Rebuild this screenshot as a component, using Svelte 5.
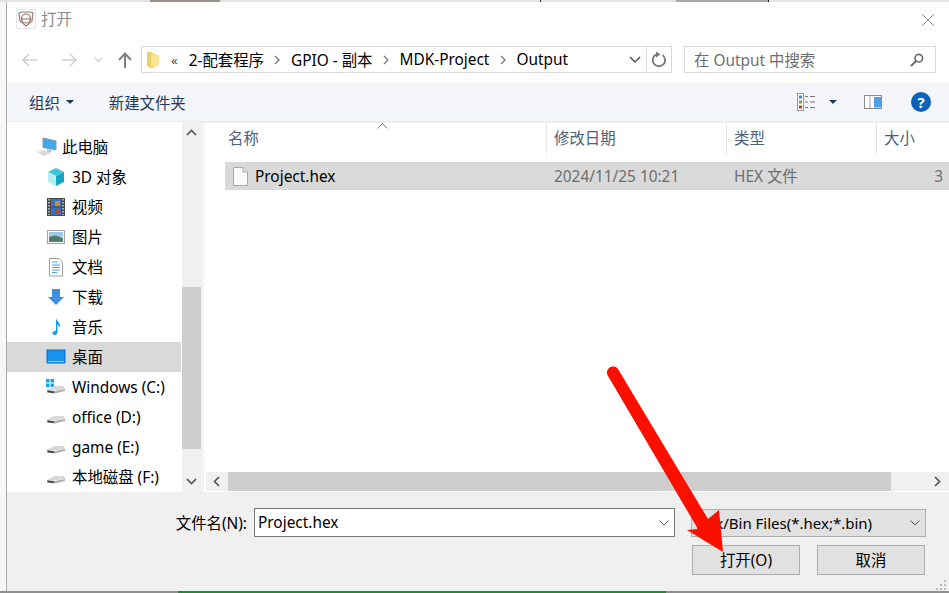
<script>
	const places = [
		{ icon: 'pc', label: '此电脑', top: true },
		{ icon: 'cube', label: '3D 对象' },
		{ icon: 'film', label: '视频' },
		{ icon: 'pic', label: '图片' },
		{ icon: 'doc', label: '文档' },
		{ icon: 'down', label: '下载' },
		{ icon: 'music', label: '音乐' },
		{ icon: 'desk', label: '桌面', selected: true },
		{ icon: 'win', label: 'Windows (C:)', latin: true },
		{ icon: 'disk', label: 'office (D:)', latin: true },
		{ icon: 'disk', label: 'game (E:)', latin: true },
		{ icon: 'disk', label: '本地磁盘 (F:)' }
	];
	const crumbs = ['2-配套程序', 'GPIO - 副本', 'MDK-Project', 'Output'];
</script>

{#snippet drive()}
	<path d="M1 13 L8 9 L18 9 L19 12 L8 13.5 Z" fill="#d8d8d8" />
	<path d="M1 13 L9 14 L19 12 V14 L9 16.5 L1 15.5 Z" fill="#b0b0b0" />
	<path d="M1.5 13.5 L8 14.4 V16 L1.5 15.2 Z" fill="#3a3a3a" />
{/snippet}

<div class="screen">
	<div class="topstrip">
		<span class="frag a"></span><span class="frag b"></span><span class="frag c"></span><span class="frag d"></span>
	</div>
	<div class="window">
		<div class="title">
			<svg width="20" height="20" viewBox="0 0 20 20">
				<rect x="0.5" y="0.5" width="19" height="19" fill="#fff" stroke="#e6e6e6" />
				<path d="M3 4 L6 3 L14 3 L17 4 L16 12 L10 17 L4 12 Z" fill="none" stroke="#8d7a70" stroke-width="1.2" />
				<circle cx="10" cy="9.5" r="4.5" fill="none" stroke="#a06a5c" stroke-width="1.2" />
				<path d="M5 10 H15" stroke="#a06a5c" />
			</svg>
			<span class="title-text">打开</span>
			<svg class="close" width="14" height="14" viewBox="0 0 14 14">
				<path d="M1 1 L13 13 M13 1 L1 13" stroke="#8a8a8a" stroke-width="1" fill="none" />
			</svg>
		</div>

		<div class="nav">
			<svg class="nav-ic" style="width:16px" viewBox="0 0 16 14"><path d="M1 7 H15 M7 1 L1 7 L7 13" fill="none" stroke="#d0d0d0" stroke-width="1.6" /></svg>
			<svg class="nav-ic fwd" style="width:16px" viewBox="0 0 16 14"><path d="M0 7 H14 M8 1 L14 7 L8 13" fill="none" stroke="#d0d0d0" stroke-width="1.6" /></svg>
			<svg class="nav-ic chev" style="width:9px" viewBox="0 0 9 6"><path d="M0.5 0.5 L4.5 4.5 L8.5 0.5" fill="none" stroke="#d0d0d0" stroke-width="1.3" /></svg>
			<svg class="nav-ic up" style="width:14px;height:16px" viewBox="0 0 14 16"><path d="M7 16 V2 M1 8 L7 1.5 L13 8" fill="none" stroke="#7f7f7f" stroke-width="2" /></svg>
			<div class="address">
				<svg class="folder" width="13" height="18" viewBox="0 0 13 18">
					<path d="M0 1 H5 L6 3 H9 V15 L4 17.5 L0 15 Z" fill="#f0cf63" />
					<path d="M4 4 H12 V15 H4 Z" fill="#fbe595" />
				</svg>
				<span class="dbl">«</span>
				{#each crumbs as crumb, i}
					{#if i > 0}
						<svg class="sep" width="6" height="10" viewBox="0 0 6 10"><path d="M1 1 L5 5 L1 9" fill="none" stroke="#777" stroke-width="1.3" /></svg>
					{/if}
					<span class="crumb">{crumb}</span>
				{/each}
				<span class="grow"></span>
				<svg class="addr-chev" width="12" height="7" viewBox="0 0 12 7"><path d="M1 1 L6 6 L11 1" fill="none" stroke="#555" stroke-width="1.5" /></svg>
				<div class="refresh">
					<svg width="16" height="17" viewBox="0 0 16 17">
						<path d="M5 3.6 A6.2 6.2 0 1 0 11.5 4" fill="none" stroke="#777" stroke-width="1.8" />
						<path d="M9 0.5 V6.5 L4.5 3.5 Z" fill="#777" transform="rotate(180 7 3.5)" />
					</svg>
				</div>
			</div>
			<div class="search">
				<span>在 Output 中搜索</span>
				<svg width="14" height="14" viewBox="0 0 14 14">
					<circle cx="8.8" cy="5.2" r="3.8" fill="none" stroke="#6e6e6e" stroke-width="1.7" />
					<path d="M6 8 L1 13" stroke="#6e6e6e" stroke-width="2.2" />
				</svg>
			</div>
		</div>

		<div class="toolbar">
			<span class="tool">组织</span>
			<span class="caret"></span>
			<span class="tool newdir">新建文件夹</span>
			<span class="grow"></span>
			<svg class="views" width="18" height="18" viewBox="0 0 18 18">
				<rect x="0.5" y="0.5" width="6" height="17" fill="#fff" stroke="#999" />
				<rect x="2" y="2.5" width="3" height="3" fill="#3f83c5" />
				<rect x="2" y="7.5" width="3" height="3" fill="#a39235" />
				<rect x="2" y="12.5" width="3" height="3" fill="#b5482f" />
				<path d="M8 3.5 H11 M13 3.5 H18 M8 9 H11 M13 9 H18 M8 14.5 H11 M13 14.5 H18" stroke="#777" />
			</svg>
			<span class="caret dark"></span>
			<svg class="pane" width="18" height="14" viewBox="0 0 18 14">
				<rect x="0.5" y="0.5" width="17" height="13" fill="#fff" stroke="#8c8c8c" />
				<rect x="5" y="1" width="2" height="12" fill="#cfcfcf" />
				<rect x="10" y="2" width="7" height="10.5" fill="#4f9ee6" />
			</svg>
			<span class="help">?</span>
		</div>

		<div class="body">
			<div class="side">
				<div class="tree">
					{#each places as place}
						<div class="place" class:selected={place.selected} class:top={place.top} class:latin={place.latin}>
							<svg class="place-ic" width="20" height="20" viewBox="0 0 20 20">
								{#if place.icon === 'pc'}
									<path d="M6 1 L19 4 V13 L6 10.5 Z" fill="#3fa9ee" stroke="#8a9aa8" />
									<path d="M10 12 L14 13 V15.5 L10 14.5 Z" fill="#b9c3cc" />
									<path d="M0 15 L6 13 L14 16 L7 19 Z" fill="#d5d8dc" />
								{:else if place.icon === 'cube'}
									<path d="M10 1 L18 5 L10 9 L2 5 Z" fill="#3cc6d8" />
									<path d="M2 5 L10 9 V19 L2 15 Z" fill="#b5ecf0" />
									<path d="M18 5 L10 9 V19 L18 15 Z" fill="#12a5bd" />
								{:else if place.icon === 'film'}
									<rect x="1" y="1" width="18" height="18" fill="#4a4a4a" />
									<rect x="5" y="2" width="10" height="7.5" fill="#3c6fc0" />
									<rect x="5" y="10.5" width="10" height="7.5" fill="#3c6fc0" />
									<rect x="9" y="4" width="5" height="5" fill="#c6922f" />
									<rect x="9" y="12" width="5" height="5" fill="#b0482c" />
									<path d="M3 2 V18" stroke="#cfcfcf" stroke-width="1.5" stroke-dasharray="1.5 1.5" />
									<path d="M17 2 V18" stroke="#cfcfcf" stroke-width="1.5" stroke-dasharray="1.5 1.5" />
								{:else if place.icon === 'pic'}
									<rect x="1.5" y="3.5" width="17" height="13" fill="#fff" stroke="#a5a5a5" />
									<rect x="3" y="5" width="14" height="5" fill="#9cc7e8" />
									<path d="M3 10 L9 8.5 L17 11 V15 H3 Z" fill="#4f7d6a" />
								{:else if place.icon === 'doc'}
									<path d="M3.5 1.5 H13 L16.5 5 V19 H3.5 Z" fill="#fff" stroke="#a0a0a0" />
									<path d="M6 5 H11 M6 8 H14 M6 10.5 H14 M6 13 H14 M6 15.5 H11" stroke="#4f9fd8" />
								{:else if place.icon === 'down'}
									<path d="M6 2 H14 V10 H18 L10 18 L2 10 H6 Z" fill="#3d8fe0" />
								{:else if place.icon === 'music'}
									<path d="M10 1 C10.5 5 15.5 6 14 11 C13.5 8.5 12 8 11.5 7.5 V15 C11.5 17.5 8.5 18.5 7 17.5 C5.5 16 7.5 13.5 10 14 Z" fill="#0f9bf0" />
								{:else if place.icon === 'desk'}
									<rect x="1" y="3" width="18" height="13" fill="#1793ee" stroke="#0b6fc0" />
									<path d="M2 14.5 H18" stroke="#9fd4f8" />
								{:else}
									{#if place.icon === 'win'}
										<path d="M0 2 H3.5 V5.5 H0 Z M4.5 2 H8 V5.5 H4.5 Z M0 6.5 H3.5 V10 H0 Z M4.5 6.5 H8 V10 H4.5 Z" fill="#17a5ea" />
									{/if}
									{@render drive()}
								{/if}
							</svg>
							<span class="place-text">{place.label}</span>
						</div>
					{/each}
				</div>
				<div class="vbar">
					<svg width="11" height="7" viewBox="0 0 11 7"><path d="M1 6 L5.5 1.5 L10 6" fill="none" stroke="#555" stroke-width="1.7" /></svg>
					<div class="vspace"></div>
					<div class="vthumb"></div>
					<div class="vspace small"></div>
					<svg width="11" height="7" viewBox="0 0 11 7"><path d="M1 1 L5.5 5.5 L10 1" fill="none" stroke="#555" stroke-width="1.7" /></svg>
				</div>
			</div>

			<div class="list">
				<div class="head">
					<div class="col name">名称
						<svg class="sort" width="11" height="6" viewBox="0 0 11 6"><path d="M0.5 5.5 L5.5 0.5 L10.5 5.5" fill="none" stroke="#8a8a8a" /></svg>
					</div>
					<div class="col date">修改日期</div>
					<div class="col type">类型</div>
					<div class="col size">大小</div>
				</div>
				<div class="row">
					<div class="cell name">
						<svg width="15" height="19" viewBox="0 0 15 19">
							<path d="M0.5 0.5 H10 L14.5 5 V18.5 H0.5 Z" fill="#fbfbfb" stroke="#a8a8a8" />
							<path d="M10 0.5 V5 H14.5" fill="#e6e6e6" stroke="#a8a8a8" />
						</svg>
						<span>Project.hex</span>
					</div>
					<div class="cell date">2024/11/25 10:21</div>
					<div class="cell type">HEX 文件</div>
					<div class="cell size">3</div>
				</div>
				<div class="grow"></div>
				<div class="hbar">
					<svg width="7" height="11" viewBox="0 0 7 11"><path d="M6 1 L1.5 5.5 L6 10" fill="none" stroke="#555" stroke-width="1.7" /></svg>
					<div class="hthumb"></div>
					<svg class="hright" width="7" height="11" viewBox="0 0 7 11"><path d="M1 1 L5.5 5.5 L1 10" fill="none" stroke="#555" stroke-width="1.7" /></svg>
				</div>
			</div>
		</div>

		<div class="footer">
			<div class="fields">
				<span class="label">文件名(N):</span>
				<div class="input">
					<span>Project.hex</span>
					<svg width="10" height="6" viewBox="0 0 10 6"><path d="M0.5 0.5 L5 5 L9.5 0.5" fill="none" stroke="#555" /></svg>
				</div>
				<div class="filter">
					<span>Hex/Bin Files(*.hex;*.bin)</span>
					<svg width="10" height="6" viewBox="0 0 10 6"><path d="M0.5 0.5 L5 5 L9.5 0.5" fill="none" stroke="#555" /></svg>
				</div>
			</div>
			<div class="buttons">
				<button>打开(O)</button>
				<button>取消</button>
			</div>
			<svg class="grip" width="12" height="12" viewBox="0 0 12 12">
				<path d="M9 1 h2 v2 h-2 Z M5 5 h2 v2 h-2 Z M9 5 h2 v2 h-2 Z M1 9 h2 v2 h-2 Z M5 9 h2 v2 h-2 Z M9 9 h2 v2 h-2 Z" fill="#bcbcbc" />
			</svg>
		</div>
	</div>
	<div class="bottomstrip"><span class="green"></span></div>

	<svg class="arrow" width="949" height="593" viewBox="0 0 949 593">
		<path d="M608 376 A5.6 5.6 0 0 1 618 369 L708 519 L719 510 L723 552 L687 530 L698 529 Z" fill="#fb1000" />
	</svg>
</div>

<style>
	:global(body) {
		margin: 0;
		overflow: hidden;
	}

	.screen {
		position: relative;
		width: 949px;
		height: 593px;
		overflow: hidden;
		background: #f7f7f7;
		display: flex;
		flex-direction: column;
		font-family: 'Noto Sans', 'Noto Sans CJK SC', sans-serif;
		font-size: 15.4px;
		color: #000;
	}

	.topstrip {
		height: 2px;
		display: flex;
		background: #e4e4e4;
	}

	.frag {
		display: block;
		height: 2px;
	}

	.frag.a {
		width: 70px;
		margin-left: 150px;
		background: #9c8f88;
	}

	.frag.b {
		width: 1px;
		margin-left: 320px;
		background: #333;
	}

	.frag.c {
		width: 92px;
		margin-left: 135px;
		background: #a8a8a8;
	}

	.frag.d {
		width: 1px;
		background: #222;
	}

	.window {
		flex: 1;
		margin-left: 6px;
		border-left: 1px solid #a9a9a9;
		background: #fff;
		display: flex;
		flex-direction: column;
		min-height: 0;
	}

	.bottomstrip {
		height: 2px;
		background: #8f8f8f;
	}

	.green {
		display: block;
		width: 488px;
		height: 2px;
		margin-left: 178px;
		background: #1f8a2e;
	}

	.title {
		height: 38px;
		display: flex;
		align-items: flex-start;
		padding-left: 9px;
		padding-top: 7px;
		box-sizing: border-box;
		flex-shrink: 0;
	}

	.title-text {
		margin-left: 5px;
		line-height: 22px;
		color: #8c8c8c;
	}

	.close {
		margin-left: auto;
		margin-right: 14px;
		margin-top: 4px;
	}

	.nav {
		height: 43px;
		flex-shrink: 0;
		display: flex;
		align-items: flex-start;
		padding-top: 6px;
		box-sizing: border-box;
	}

	.nav-ic {
		height: 14px;
		margin-top: 7px;
		margin-left: 15px;
		flex-shrink: 0;
	}

	.nav-ic.fwd {
		margin-left: 24px;
	}

	.nav-ic.chev {
		height: 6px;
		margin-top: 11px;
		margin-left: 16px;
	}

	.nav-ic.up {
		margin-top: 6px;
		margin-left: 15px;
	}

	.address {
		width: 531px;
		height: 27px;
		margin-left: 9px;
		box-sizing: border-box;
		border: 1px solid #d9d9d9;
		display: flex;
		align-items: center;
		padding-left: 5px;
		flex-shrink: 0;
	}

	.folder {
		flex-shrink: 0;
	}

	.dbl {
		margin-left: 11px;
		margin-right: 11px;
		color: #444;
		font-size: 13px;
	}

	.sep {
		margin: 0 10.5px;
		flex-shrink: 0;
	}

	.crumb {
		white-space: nowrap;
	}

	.grow {
		flex: 1;
	}

	.addr-chev {
		margin-right: 5px;
	}

	.refresh {
		width: 24px;
		height: 25px;
		border-left: 1px solid #d9d9d9;
		display: flex;
		align-items: center;
		justify-content: center;
	}

	.search {
		width: 252px;
		height: 27px;
		margin-left: 12px;
		box-sizing: border-box;
		border: 1px solid #d9d9d9;
		display: flex;
		align-items: center;
		justify-content: space-between;
		padding: 0 11px 0 9px;
		color: #6d6d6d;
		flex-shrink: 0;
	}

	.toolbar {
		height: 39px;
		flex-shrink: 0;
		background: #f3f5f8;
		border-bottom: 1px solid #ececec;
		box-sizing: border-box;
		display: flex;
		align-items: center;
		padding-left: 22px;
		padding-right: 18px;
		color: #1e395b;
	}

	.caret {
		width: 0;
		height: 0;
		margin-left: 6px;
		border-left: 4px solid transparent;
		border-right: 4px solid transparent;
		border-top: 4px solid #1e395b;
	}

	.caret.dark {
		margin-left: 14px;
	}

	.newdir {
		margin-left: 35px;
	}

	.pane {
		margin-left: 27px;
	}

	.help {
		width: 20px;
		height: 20px;
		margin-left: 29px;
		border-radius: 50%;
		background: #0a63b8;
		color: #fff;
		font-weight: 700;
		font-size: 15px;
		line-height: 20px;
		text-align: center;
	}

	.body {
		height: 370px;
		flex-shrink: 0;
		display: flex;
	}

	.side {
		display: flex;
		flex-shrink: 0;
		border-right: 3px solid #f4f4f4;
		width: 194px;
	}

	.tree {
		width: 175px;
		flex-shrink: 0;
		padding-top: 10px;
		box-sizing: border-box;
	}

	.place {
		height: 30px;
		display: flex;
		align-items: center;
		padding-left: 39px;
		box-sizing: border-box;
		white-space: nowrap;
	}

	.place.top {
		padding-left: 30px;
	}

	.place.top .place-ic {
		margin-right: 5px;
	}

	.place.selected {
		background: #d9d9d9;
		margin-right: 1px;
	}

	.place-ic {
		margin-right: 6px;
		flex-shrink: 0;
	}

	.place-text {
		margin-top: -1px;
	}

	.place.latin .place-text {
		margin-top: 1px;
	}

	.vbar {
		width: 19px;
		background: #f0f0f0;
		display: flex;
		flex-direction: column;
		align-items: center;
		padding-top: 7px;
		box-sizing: border-box;
	}

	.vspace {
		height: 151px;
	}

	.vspace.small {
		height: 29px;
	}

	.vthumb {
		width: 19px;
		height: 162px;
		background: #cdcdcd;
		flex-shrink: 0;
	}

	.list {
		flex: 1;
		min-width: 0;
		display: flex;
		flex-direction: column;
		border-top: 1px solid #f0f0f0;
		box-sizing: border-box;
	}

	.head {
		height: 31px;
		display: flex;
		color: #4c607a;
	}

	.col {
		position: relative;
		height: 31px;
		line-height: 31px;
		box-sizing: border-box;
		padding-left: 7px;
		border-right: 1px solid #e5e5e5;
		flex-shrink: 0;
	}

	.col.name {
		width: 343px;
		padding-left: 24px;
	}

	.col.date {
		width: 180px;
	}

	.col.type {
		width: 150px;
	}

	.col.size {
		flex: 1;
		border-right: 0;
	}

	.sort {
		position: absolute;
		left: 173px;
		top: 0;
	}

	.row {
		height: 28px;
		margin-top: 8px;
		margin-left: 21px;
		background: #d9d9d9;
		display: flex;
		align-items: center;
		color: #6d6d6d;
	}

	.cell {
		box-sizing: border-box;
		padding-left: 7px;
		flex-shrink: 0;
	}

	.cell.name {
		width: 322px;
		display: flex;
		align-items: center;
		color: #000;
		padding-left: 8px;
	}

	.cell.name span {
		margin-left: 7px;
	}

	.cell.date {
		width: 180px;
		padding-left: 7px;
	}

	.cell.type {
		width: 150px;
		margin-top: -1px;
	}

	.cell.size {
		flex: 1;
		text-align: right;
		padding-right: 6px;
	}

	.hbar {
		height: 19px;
		margin-left: 2px;
		margin-bottom: 1px;
		background: #f0f0f0;
		display: flex;
		align-items: center;
	}

	.hbar svg {
		margin-left: 7px;
		flex-shrink: 0;
	}

	.hthumb {
		width: 663px;
		height: 19px;
		margin-left: 8px;
		background: #cdcdcd;
		flex-shrink: 0;
	}

	.hbar .hright {
		margin-left: 43px;
	}

	.footer {
		flex: 1;
		position: relative;
		background: #f0f0f0;
		padding: 16px 23px 0 0;
		display: flex;
		flex-direction: column;
		align-items: flex-end;
	}

	.fields {
		display: flex;
		align-items: center;
	}

	.label {
		margin-right: 7px;
		margin-top: -1px;
	}

	.input {
		width: 421px;
		height: 29px;
		box-sizing: border-box;
		background: #fff;
		border: 1px solid #7a7a7a;
		display: flex;
		align-items: center;
		justify-content: space-between;
		padding: 0 5px 0 3px;
	}

	.filter {
		width: 235px;
		height: 28px;
		margin-left: 16px;
		box-sizing: border-box;
		background: #e1e1e1;
		border: 1px solid #adadad;
		display: flex;
		align-items: center;
		justify-content: space-between;
		padding: 0 5px 0 4px;
		font-size: 15px;
	}

	.buttons {
		display: flex;
		gap: 17px;
		margin-top: 8px;
		margin-right: 1px;
	}

	button {
		width: 108px;
		height: 30px;
		padding: 0 0 2px;
		background: #e1e1e1;
		border: 1px solid #adadad;
		font: inherit;
		color: #000;
	}

	.grip {
		position: absolute;
		right: 2px;
		bottom: 0;
	}

	.arrow {
		position: absolute;
		left: 0;
		top: 0;
		pointer-events: none;
	}
</style>
